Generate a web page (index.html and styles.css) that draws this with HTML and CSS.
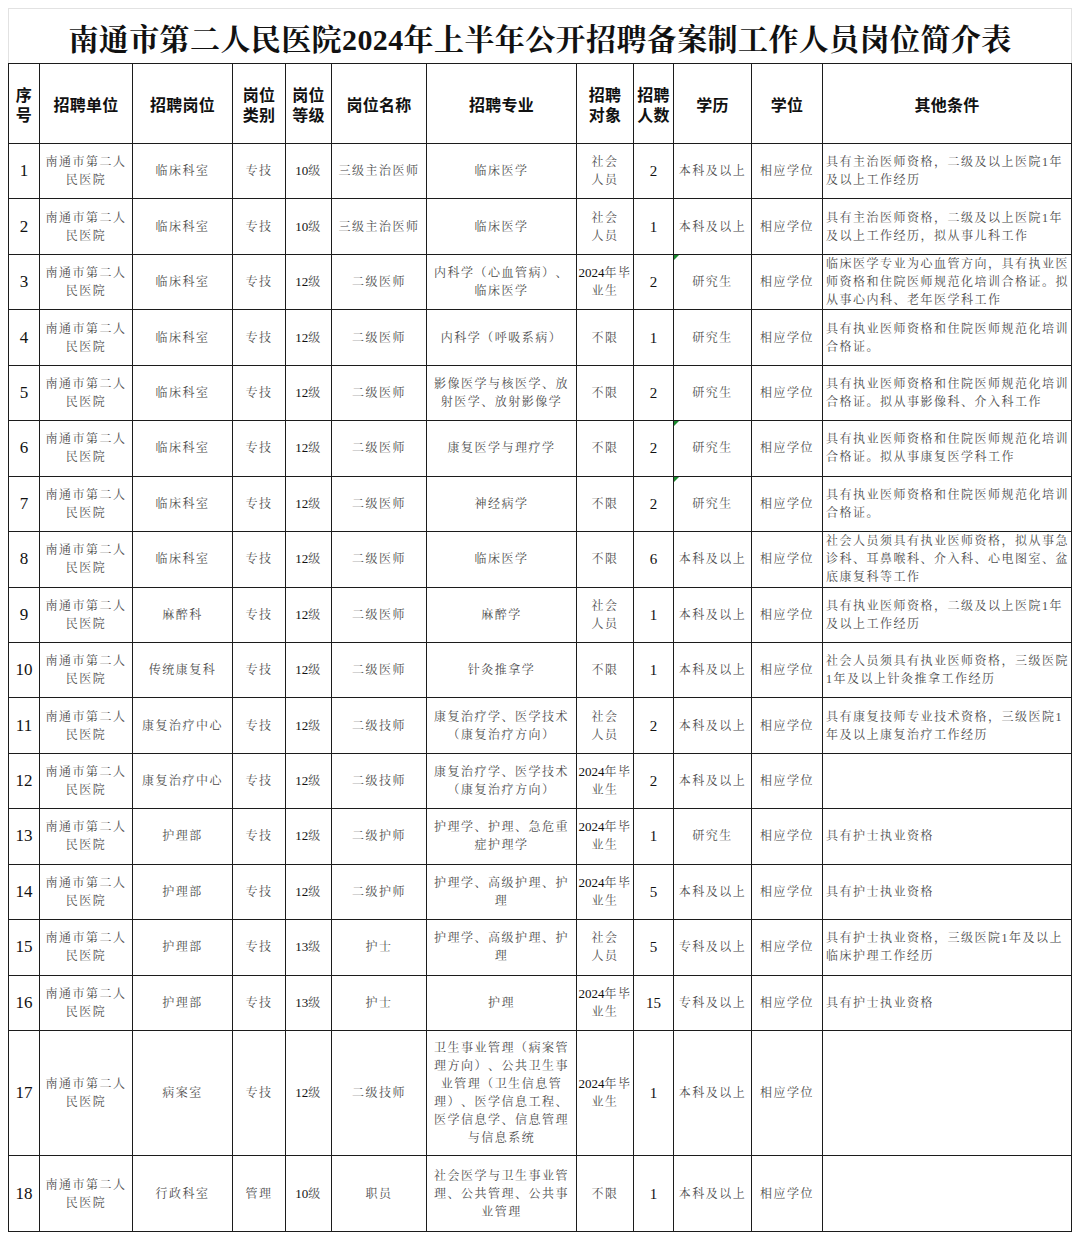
FILE: index.html
```html
<!DOCTYPE html>
<html lang="zh-CN">
<head>
<meta charset="utf-8">
<title>南通市第二人民医院2024年上半年公开招聘备案制工作人员岗位简介表</title>
<link rel="stylesheet" href="styles.css">
</head>
<body>
<div class="sheet">
  <div class="title">南通市第二人民医院2024年上半年公开招聘备案制工作人员岗位简介表</div>
  <table class="grid">
    <colgroup>
      <col class="c-no"><col class="c-unit"><col class="c-post"><col class="c-type"><col class="c-level"><col class="c-name"><col class="c-major"><col class="c-target"><col class="c-count"><col class="c-edu"><col class="c-deg"><col class="c-other">
    </colgroup>
    <thead>
      <tr>
        <th>序<br>号</th><th>招聘单位</th><th>招聘岗位</th><th>岗位<br>类别</th><th>岗位<br>等级</th><th>岗位名称</th><th>招聘专业</th><th>招聘<br>对象</th><th>招聘<br>人数</th><th>学历</th><th>学位</th><th>其他条件</th>
      </tr>
    </thead>
    <tbody>
      <tr><td class="no">1</td><td>南通市第二人民医院</td><td>临床科室</td><td>专技</td><td><span class="n">10</span>级</td><td>三级主治医师</td><td>临床医学</td><td>社会<br>人员</td><td class="cnt">2</td><td>本科及以上</td><td>相应学位</td><td class="other">具有主治医师资格，二级及以上医院1年及以上工作经历</td></tr>
      <tr><td class="no">2</td><td>南通市第二人民医院</td><td>临床科室</td><td>专技</td><td><span class="n">10</span>级</td><td>三级主治医师</td><td>临床医学</td><td>社会<br>人员</td><td class="cnt">1</td><td>本科及以上</td><td>相应学位</td><td class="other">具有主治医师资格，二级及以上医院1年及以上工作经历，拟从事儿科工作</td></tr>
      <tr><td class="no">3</td><td>南通市第二人民医院</td><td>临床科室</td><td>专技</td><td><span class="n">12</span>级</td><td>二级医师</td><td>内科学（心血管病）、临床医学</td><td><span class="n">2024</span>年毕<br>业生</td><td class="cnt">2</td><td class="flag">研究生</td><td>相应学位</td><td class="other">临床医学专业为心血管方向，具有执业医师资格和住院医师规范化培训合格证。拟从事心内科、老年医学科工作</td></tr>
      <tr><td class="no">4</td><td>南通市第二人民医院</td><td>临床科室</td><td>专技</td><td><span class="n">12</span>级</td><td>二级医师</td><td>内科学（呼吸系病）</td><td>不限</td><td class="cnt">1</td><td>研究生</td><td>相应学位</td><td class="other">具有执业医师资格和住院医师规范化培训合格证。</td></tr>
      <tr><td class="no">5</td><td>南通市第二人民医院</td><td>临床科室</td><td>专技</td><td><span class="n">12</span>级</td><td>二级医师</td><td>影像医学与核医学、放射医学、放射影像学</td><td>不限</td><td class="cnt">2</td><td>研究生</td><td>相应学位</td><td class="other">具有执业医师资格和住院医师规范化培训合格证。拟从事影像科、介入科工作</td></tr>
      <tr><td class="no">6</td><td>南通市第二人民医院</td><td>临床科室</td><td>专技</td><td><span class="n">12</span>级</td><td>二级医师</td><td>康复医学与理疗学</td><td>不限</td><td class="cnt">2</td><td class="flag">研究生</td><td>相应学位</td><td class="other">具有执业医师资格和住院医师规范化培训合格证。拟从事康复医学科工作</td></tr>
      <tr><td class="no">7</td><td>南通市第二人民医院</td><td>临床科室</td><td>专技</td><td><span class="n">12</span>级</td><td>二级医师</td><td>神经病学</td><td>不限</td><td class="cnt">2</td><td class="flag">研究生</td><td>相应学位</td><td class="other">具有执业医师资格和住院医师规范化培训合格证。</td></tr>
      <tr><td class="no">8</td><td>南通市第二人民医院</td><td>临床科室</td><td>专技</td><td><span class="n">12</span>级</td><td>二级医师</td><td>临床医学</td><td>不限</td><td class="cnt">6</td><td>本科及以上</td><td>相应学位</td><td class="other">社会人员须具有执业医师资格，拟从事急诊科、耳鼻喉科、介入科、心电图室、盆底康复科等工作</td></tr>
      <tr><td class="no">9</td><td>南通市第二人民医院</td><td>麻醉科</td><td>专技</td><td><span class="n">12</span>级</td><td>二级医师</td><td>麻醉学</td><td>社会<br>人员</td><td class="cnt">1</td><td>本科及以上</td><td>相应学位</td><td class="other">具有执业医师资格，二级及以上医院1年及以上工作经历</td></tr>
      <tr><td class="no">10</td><td>南通市第二人民医院</td><td>传统康复科</td><td>专技</td><td><span class="n">12</span>级</td><td>二级医师</td><td>针灸推拿学</td><td>不限</td><td class="cnt">1</td><td>本科及以上</td><td>相应学位</td><td class="other">社会人员须具有执业医师资格，三级医院1年及以上针灸推拿工作经历</td></tr>
      <tr><td class="no">11</td><td>南通市第二人民医院</td><td>康复治疗中心</td><td>专技</td><td><span class="n">12</span>级</td><td>二级技师</td><td>康复治疗学、医学技术（康复治疗方向）</td><td>社会<br>人员</td><td class="cnt">2</td><td>本科及以上</td><td>相应学位</td><td class="other">具有康复技师专业技术资格，三级医院1年及以上康复治疗工作经历</td></tr>
      <tr><td class="no">12</td><td>南通市第二人民医院</td><td>康复治疗中心</td><td>专技</td><td><span class="n">12</span>级</td><td>二级技师</td><td>康复治疗学、医学技术（康复治疗方向）</td><td><span class="n">2024</span>年毕<br>业生</td><td class="cnt">2</td><td>本科及以上</td><td>相应学位</td><td class="other"></td></tr>
      <tr><td class="no">13</td><td>南通市第二人民医院</td><td>护理部</td><td>专技</td><td><span class="n">12</span>级</td><td>二级护师</td><td>护理学、护理、急危重症护理学</td><td><span class="n">2024</span>年毕<br>业生</td><td class="cnt">1</td><td>研究生</td><td>相应学位</td><td class="other">具有护士执业资格</td></tr>
      <tr><td class="no">14</td><td>南通市第二人民医院</td><td>护理部</td><td>专技</td><td><span class="n">12</span>级</td><td>二级护师</td><td>护理学、高级护理、护理</td><td><span class="n">2024</span>年毕<br>业生</td><td class="cnt">5</td><td>本科及以上</td><td>相应学位</td><td class="other">具有护士执业资格</td></tr>
      <tr><td class="no">15</td><td>南通市第二人民医院</td><td>护理部</td><td>专技</td><td><span class="n">13</span>级</td><td>护士</td><td>护理学、高级护理、护理</td><td>社会<br>人员</td><td class="cnt">5</td><td>专科及以上</td><td>相应学位</td><td class="other">具有护士执业资格，三级医院1年及以上临床护理工作经历</td></tr>
      <tr><td class="no">16</td><td>南通市第二人民医院</td><td>护理部</td><td>专技</td><td><span class="n">13</span>级</td><td>护士</td><td>护理</td><td><span class="n">2024</span>年毕<br>业生</td><td class="cnt">15</td><td>专科及以上</td><td>相应学位</td><td class="other">具有护士执业资格</td></tr>
      <tr class="tall"><td class="no">17</td><td>南通市第二人民医院</td><td>病案室</td><td>专技</td><td><span class="n">12</span>级</td><td>二级技师</td><td>卫生事业管理（病案管理方向）、公共卫生事业管理（卫生信息管理）、医学信息工程、医学信息学、信息管理与信息系统</td><td><span class="n">2024</span>年毕<br>业生</td><td class="cnt">1</td><td>本科及以上</td><td>相应学位</td><td class="other"></td></tr>
      <tr class="last"><td class="no">18</td><td>南通市第二人民医院</td><td>行政科室</td><td>管理</td><td><span class="n">10</span>级</td><td>职员</td><td>社会医学与卫生事业管理、公共管理、公共事业管理</td><td>不限</td><td class="cnt">1</td><td>本科及以上</td><td>相应学位</td><td class="other"></td></tr>
    </tbody>
  </table>
</div>
</body>
</html>
```

FILE: styles.css
```css
html, body {
  background: #ffffff;
}
body {
  margin: 8px;
  font-family: "Liberation Serif", "Noto Serif CJK SC", "Noto Sans CJK SC", serif;
  color: #4a4a4a;
  text-spacing-trim: space-all;
}
.sheet {
  width: 1064px;
}
.title {
  box-sizing: border-box;
  height: 55px;
  border: 1px solid #e2e2e2;
  border-bottom: none;
  display: flex;
  align-items: center;
  justify-content: center;
  font-family: "Liberation Serif", "Noto Serif CJK SC", "Noto Sans CJK SC", serif;
  font-size: 30px;
  font-weight: 700;
  letter-spacing: 0.4px;
  color: #111111;
  padding-top: 2px;
}
.grid {
  width: 1063px;
  border-collapse: collapse;
  table-layout: fixed;
}
.c-no { width: 31px; }
.c-unit { width: 93px; }
.c-post { width: 100px; }
.c-type { width: 53px; }
.c-level { width: 46px; }
.c-name { width: 95px; }
.c-major { width: 150px; }
.c-target { width: 57px; }
.c-count { width: 40px; }
.c-edu { width: 78px; }
.c-deg { width: 71px; }
.c-other { width: 249px; }

.grid th,
.grid td {
  border: 1px solid #1c1c1c;
  padding: 0 3px;
  text-align: center;
  vertical-align: middle;
  text-spacing-trim: space-all;
}
.grid th {
  height: 79px;
  font-family: "Noto Sans CJK SC", sans-serif;
  font-size: 16px;
  font-weight: 600;
  line-height: 20px;
  letter-spacing: 0.3px;
  color: #111111;
}
.grid tbody tr {
  height: 55.44px;
}
.grid tbody tr.tall {
  height: 125px;
}
.grid tbody tr.last {
  height: 76px;
}
.grid td {
  font-size: 12px;
  line-height: 18px;
  letter-spacing: 1.5px;
  color: #4d4d4d;
  position: relative;
}
.grid td.other {
  text-align: left;
  padding: 0 2px 0 3px;
}
.grid td:nth-child(8) {
  padding: 0 1px;
  white-space: nowrap;
}
.grid td.no {
  font-size: 17px;
  letter-spacing: 0;
  color: #111111;
  padding: 0;
}
.grid td.cnt {
  font-size: 15px;
  letter-spacing: 0;
  color: #111111;
  padding: 0;
}
.n {
  font-size: 13px;
  letter-spacing: 0;
  color: #111111;
}
.grid td.flag::before {
  content: "";
  position: absolute;
  left: 0;
  top: 0;
  width: 0;
  height: 0;
  border-top: 5px solid #1a8a2e;
  border-right: 5px solid transparent;
}
```
